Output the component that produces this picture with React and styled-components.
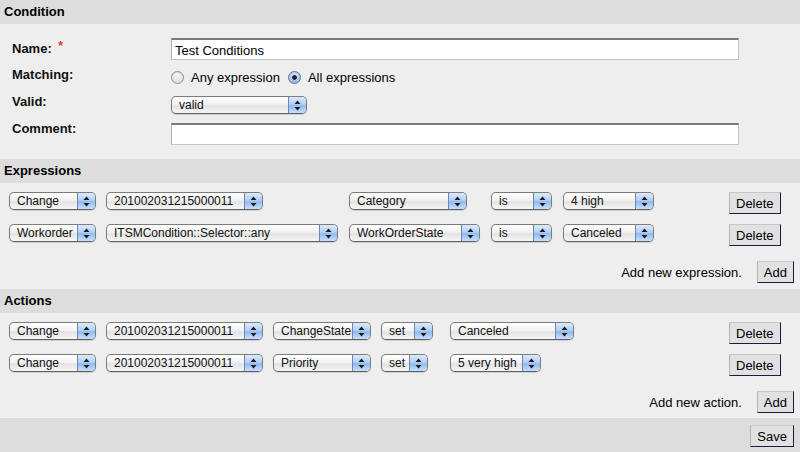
import React from 'react';
import styled, { createGlobalStyle } from 'styled-components';

const GlobalStyle = createGlobalStyle`
  html, body {
    margin: 0;
    padding: 0;
    background: #eeeeee;
  }
  body {
    font-family: "Liberation Sans", Arial, sans-serif;
    font-size: 13px;
    color: #000;
  }
`;

const expressions = [
  [
    { value: 'Change', width: 87 },
    { value: '201002031215000011', width: 157 },
    { value: 'Category', width: 118 },
    { value: 'is', width: 61 },
    { value: '4 high', width: 91 },
  ],
  [
    { value: 'Workorder', width: 87 },
    { value: 'ITSMCondition::Selector::any', width: 232 },
    { value: 'WorkOrderState', width: 131 },
    { value: 'is', width: 61 },
    { value: 'Canceled', width: 91 },
  ],
];

const actions = [
  [
    { value: 'Change', width: 87 },
    { value: '201002031215000011', width: 157 },
    { value: 'ChangeState', width: 98 },
    { value: 'set', width: 52 },
    { value: 'Canceled', width: 124 },
  ],
  [
    { value: 'Change', width: 87 },
    { value: '201002031215000011', width: 157 },
    { value: 'Priority', width: 98 },
    { value: 'set', width: 47 },
    { value: '5 very high', width: 91 },
  ],
];

function Select({ value, width }) {
  return (
    <SelectBox $width={width}>
      <SelectValue>{value}</SelectValue>
      <SelectArrows>
        <svg width="7" height="11" viewBox="0 0 7 11">
          <path d="M3.5 0.5 L6.5 4 L0.5 4 Z" fill="#1c1c1c" />
          <path d="M3.5 10.5 L6.5 7 L0.5 7 Z" fill="#1c1c1c" />
        </svg>
      </SelectArrows>
    </SelectBox>
  );
}

function RuleRows({ rows, cols }) {
  return rows.map((row, i) => (
    <RuleRow key={i} $cols={cols}>
      {row.map((cell, j) => (
        <Select key={j} value={cell.value} width={cell.width} />
      ))}
      <Button>Delete</Button>
    </RuleRow>
  ));
}

function App() {
  return (
    <>
      <GlobalStyle />
      <Page>
        <SectionHeader>Condition</SectionHeader>
        <ConditionBody>
          <FieldRow>
            <Label>
              Name: <Required>*</Required>
            </Label>
            <TextInput defaultValue="Test Conditions" />
          </FieldRow>
          <FieldRow>
            <Label>Matching:</Label>
            <RadioGroup>
              <RadioOption>
                <Radio />
                Any expression
              </RadioOption>
              <RadioOption>
                <Radio $checked />
                All expressions
              </RadioOption>
            </RadioGroup>
          </FieldRow>
          <FieldRow>
            <Label>Valid:</Label>
            <FieldOffset>
              <Select value="valid" width={136} />
            </FieldOffset>
          </FieldRow>
          <FieldRow>
            <Label>Comment:</Label>
            <FieldOffset>
              <TextInput defaultValue="" />
            </FieldOffset>
          </FieldRow>
        </ConditionBody>

        <SectionHeader>Expressions</SectionHeader>
        <RuleBody>
          <RuleRows rows={expressions} cols="97px 243px 142px 72px 166px auto" />
          <AddRow>
            <AddText>Add new expression.</AddText>
            <Button>Add</Button>
          </AddRow>
        </RuleBody>

        <SectionHeader>Actions</SectionHeader>
        <RuleBody $bottom={5}>
          <RuleRows rows={actions} cols="97px 167px 108px 69px 279px auto" />
          <AddRow>
            <AddText>Add new action.</AddText>
            <Button>Add</Button>
          </AddRow>
        </RuleBody>

        <SaveBar>
          <Button>Save</Button>
        </SaveBar>
      </Page>
    </>
  );
}

const Page = styled.div`
  width: 800px;
  height: 452px;
  overflow: hidden;
  background: #eeeeee;
`;

const SectionHeader = styled.div`
  height: 24px;
  line-height: 24px;
  padding-left: 4px;
  background: #dddddd;
  font-weight: bold;
  font-size: 13px;
`;

const ConditionBody = styled.div`
  display: flex;
  flex-direction: column;
  gap: 7px;
  padding: 14px 0 14px 12px;
  height: 135px;
  box-sizing: border-box;
`;

const FieldRow = styled.div`
  display: flex;
  align-items: flex-start;
`;

const Label = styled.div`
  width: 159px;
  flex: none;
  line-height: 16px;
  font-weight: bold;
  font-size: 13px;
  color: #111;
`;

const Required = styled.span`
  color: #e0332a;
  font-size: 12px;
  vertical-align: 3px;
  margin-left: 3px;
`;

const FieldOffset = styled.div`
  padding-top: 2px;
`;

const TextInput = styled.input`
  width: 568px;
  height: 22px;
  box-sizing: border-box;
  margin: 0;
  padding: 1px 3px 0;
  border: 1px solid #c4c4c4;
  border-top: 2px solid #7a7a7a;
  border-left-color: #b0b0b0;
  background: #fff;
  font-family: "Liberation Sans", Arial, sans-serif;
  font-size: 13px;
  color: #000;
  outline: none;
`;

const RadioGroup = styled.div`
  display: flex;
  align-items: center;
  gap: 8px;
  height: 19px;
  padding-top: 1px;
`;

const RadioOption = styled.label`
  display: flex;
  align-items: center;
  gap: 7px;
  font-size: 13px;
`;

const Radio = styled.span`
  width: 13px;
  height: 13px;
  box-sizing: border-box;
  border-radius: 50%;
  border: 1px solid ${(p) => (p.$checked ? '#5e6f8c' : '#8d8d8d')};
  background: ${(p) =>
    p.$checked
      ? 'radial-gradient(circle at 50% 50%, #1d2533 0, #1d2533 2px, transparent 2.6px), linear-gradient(#d7e5f7, #93b8e6)'
      : 'linear-gradient(#fafafa, #dcdcdc)'};
  box-shadow: inset 0 1px 1px rgba(0, 0, 0, 0.15);
`;

const SelectBox = styled.div`
  width: ${(p) => p.$width}px;
  height: 18px;
  box-sizing: border-box;
  display: flex;
  border: 1px solid #7c7c7c;
  border-bottom-color: #5d5d5d;
  border-radius: 5px;
  overflow: hidden;
  background: linear-gradient(#ffffff 0%, #f3f3f3 45%, #e3e3e3 55%, #f6f6f6 100%);
  box-shadow: 0 1px 1px rgba(0, 0, 0, 0.12);
`;

const SelectValue = styled.span`
  flex: 1;
  min-width: 0;
  padding-left: 7px;
  line-height: 16px;
  font-size: 12px;
  white-space: nowrap;
  overflow: hidden;
  color: #111;
`;

const SelectArrows = styled.span`
  width: 17px;
  flex: none;
  display: flex;
  align-items: center;
  justify-content: center;
  border-left: 1px solid #6f86b5;
  background: linear-gradient(#dbe9fb 0%, #b4d0f4 45%, #8fbaf0 55%, #c9e0fb 100%);
`;

const RuleBody = styled.div`
  padding: 9px 6px ${(p) => p.$bottom ?? 6}px 9px;
`;

const RuleRow = styled.div`
  display: grid;
  grid-template-columns: ${(p) => p.$cols};
  align-items: start;
  height: 22px;
  margin-bottom: 10px;
`;

const AddRow = styled.div`
  display: flex;
  justify-content: flex-end;
  align-items: center;
  gap: 15px;
  margin-top: 15px;
`;

const AddText = styled.span`
  font-size: 13px;
`;

const Button = styled.button`
  height: 22px;
  box-sizing: border-box;
  margin: 0;
  padding: 0 6px;
  justify-self: start;
  background: #e1e1e1;
  border: 1px solid;
  border-color: #c8c8c8 #1e1c3c #1e1c3c #b4b4b4;
  font-family: "Liberation Sans", Arial, sans-serif;
  font-size: 13px;
  color: #000;
  cursor: pointer;
`;

const SaveBar = styled.div`
  display: flex;
  justify-content: flex-end;
  padding: 7px 6px;
  background: #dddddd;
  height: 34px;
  box-sizing: border-box;
`;

export default App;
